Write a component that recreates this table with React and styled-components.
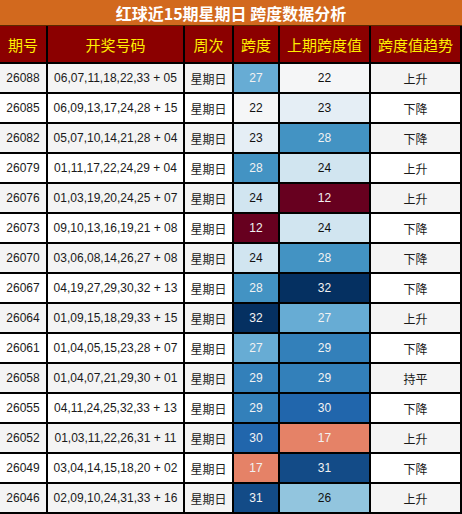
import React from "react";
import styled, { createGlobalStyle } from "styled-components";

const Global = createGlobalStyle`
  html, body { margin: 0; padding: 0; background: #ffffff; }
  body { font-family: "Liberation Sans", "Noto Sans CJK SC", sans-serif; }
`;

const Wrapper = styled.div`
  width: 462px;
  display: flex;
  flex-direction: column;
`;

const Title = styled.div`
  height: 25px;
  background: #d2691e;
  color: #ffffff;
  font-family: "Noto Sans CJK SC", sans-serif;
  font-weight: 700;
  font-size: 16px;
  display: flex;
  align-items: center;
  justify-content: center;
  border-bottom: 1px solid #5a2a00;
`;

const Table = styled.table`
  width: 461px;
  border-collapse: collapse;
  table-layout: fixed;
`;

const HeadCell = styled.th`
  height: 36px;
  padding: 0;
  background: #8b0000;
  color: #ffef00;
  font-family: "Noto Sans CJK SC", sans-serif;
  font-weight: 400;
  font-size: 15px;
  text-align: center;
  border: 2px solid #000;
  border-top: 0;
  &:first-child { border-left: 0; }
`;

const Row = styled.tr`
  background: ${(p) => (p.$alt ? "#f4f4f4" : "#ffffff")};
`;

const Cell = styled.td`
  height: 28px;
  padding: 0;
  text-align: center;
  font-size: 12px;
  font-family: ${(p) => (p.$cjk ? '"Noto Sans CJK SC", sans-serif' : '"Liberation Sans", "Noto Sans CJK SC", sans-serif')};
  color: #1a1a1a;
  border: 2px solid #000;
  white-space: nowrap;
  &:first-child { border-left: 0; }
`;

const HeatCell = styled(Cell)`
  background: ${(p) => p.$bg};
  color: ${(p) => (p.$light ? "#f2f2f2" : "#111")};
`;

const heat = {
  12: ["#67001f", true],
  17: ["#e58267", true],
  22: ["#f5f6f7", false],
  23: ["#e5eef5", false],
  24: ["#d1e5f0", false],
  26: ["#92c5de", false],
  27: ["#67acd4", true],
  28: ["#4393c3", true],
  29: ["#3380ba", true],
  30: ["#2166ac", true],
  31: ["#134b87", true],
  32: ["#053061", true],
};

const rows = [
  ["26088", "06,07,11,18,22,33 + 05", 27, 22, "上升"],
  ["26085", "06,09,13,17,24,28 + 15", 22, 23, "下降"],
  ["26082", "05,07,10,14,21,28 + 04", 23, 28, "下降"],
  ["26079", "01,11,17,22,24,29 + 04", 28, 24, "上升"],
  ["26076", "01,03,19,20,24,25 + 07", 24, 12, "上升"],
  ["26073", "09,10,13,16,19,21 + 08", 12, 24, "下降"],
  ["26070", "03,06,08,14,26,27 + 08", 24, 28, "下降"],
  ["26067", "04,19,27,29,30,32 + 13", 28, 32, "下降"],
  ["26064", "01,09,15,18,29,33 + 15", 32, 27, "上升"],
  ["26061", "01,04,05,15,23,28 + 07", 27, 29, "下降"],
  ["26058", "01,04,07,21,29,30 + 01", 29, 29, "持平"],
  ["26055", "04,11,24,25,32,33 + 13", 29, 30, "下降"],
  ["26052", "01,03,11,22,26,31 + 11", 30, 17, "上升"],
  ["26049", "03,04,14,15,18,20 + 02", 17, 31, "下降"],
  ["26046", "02,09,10,24,31,33 + 16", 31, 26, "上升"],
];

const widths = [47, 137, 49, 46, 91, 91];
const heads = ["期号", "开奖号码", "周次", "跨度", "上期跨度值", "跨度值趋势"];

export default function App() {
  return (
    <Wrapper>
      <Global />
      <Title>红球近15期星期日 跨度数据分析</Title>
      <Table>
        <colgroup>
          {widths.map((w, i) => (
            <col key={i} style={{ width: w }} />
          ))}
        </colgroup>
        <thead>
          <tr>
            {heads.map((h) => (
              <HeadCell key={h}>{h}</HeadCell>
            ))}
          </tr>
        </thead>
        <tbody>
          {rows.map((r, i) => (
            <Row key={r[0]} $alt={i % 2 === 0}>
              <Cell>{r[0]}</Cell>
              <Cell>{r[1]}</Cell>
              <Cell $cjk>星期日</Cell>
              <HeatCell $bg={heat[r[2]][0]} $light={heat[r[2]][1]}>{r[2]}</HeatCell>
              <HeatCell $bg={heat[r[3]][0]} $light={heat[r[3]][1]}>{r[3]}</HeatCell>
              <Cell $cjk>{r[4]}</Cell>
            </Row>
          ))}
        </tbody>
      </Table>
    </Wrapper>
  );
}
